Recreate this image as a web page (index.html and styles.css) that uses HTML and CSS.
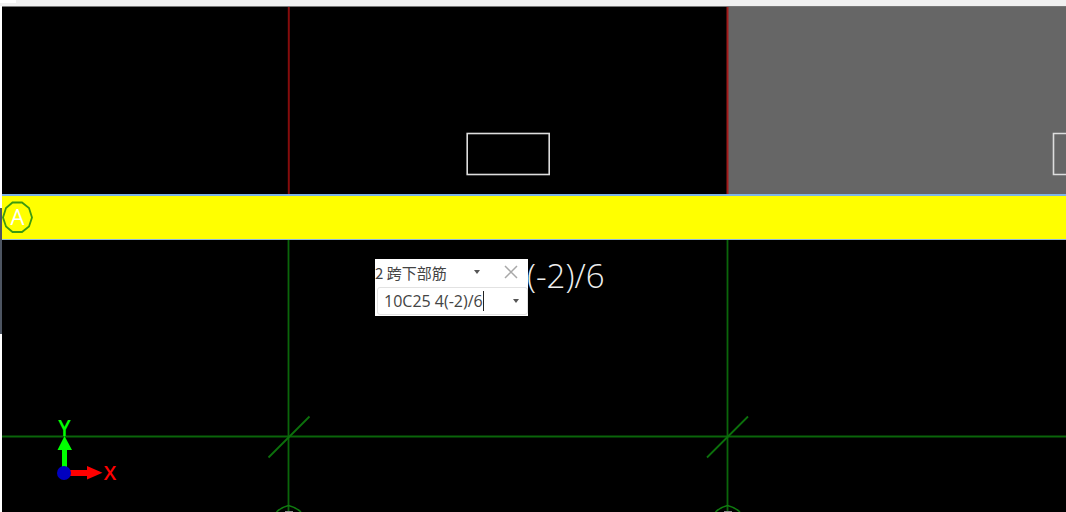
FILE: index.html
```html
<!DOCTYPE html>
<html lang="zh">
<head>
<meta charset="utf-8">
<title>CAD</title>
<link rel="stylesheet" href="styles.css">
</head>
<body>
<div class="app">
  <div class="topbar"><div class="tab"></div></div>
  <div class="workspace">
    <div class="strip"><div class="strip-dark"></div></div>
    <div class="canvas">
      <svg class="drawing" width="1064" height="506" viewBox="2 6 1064 506" xmlns="http://www.w3.org/2000/svg">
        <rect x="2" y="6" width="1064" height="506" fill="#000"/>
        <rect x="728" y="7" width="338" height="188" fill="#666"/>
        <rect x="2" y="6" width="1064" height="1" fill="#777"/>
        <path d="M288.8 7V195" stroke="#860c0c" stroke-width="2" fill="none"/>
        <path d="M727.500 7V195" stroke="#a31a1a" stroke-width="2" fill="none"/>
        <rect x="467.200" y="133.500" width="82" height="41" fill="none" stroke="#ddd" stroke-width="1.600"/>
        <path d="M1066 133.500H1053.500V174.500H1066" fill="none" stroke="#ddd" stroke-width="1.600"/>
        <path d="M288.500 240V512M727.500 240V512M2 436.500H1066" stroke="#0a650a" stroke-width="1.800" fill="none"/>
        <path d="M268.500 457.500L309.500 416.500M707 457.500L748 416.500" stroke="#0c700c" stroke-width="1.800" fill="none"/>
        <path d="M276.500 512Q281 507.500 288.500 505.500Q296 507.500 301 512M715.500 512Q720 507.500 727.500 505.500Q735 507.500 740 512" stroke="#0f7a0f" stroke-width="1.600" fill="none"/>
        <rect x="285" y="511" width="8" height="1" fill="#888"/>
        <rect x="724" y="511" width="8" height="1" fill="#888"/>
        <rect x="2" y="194" width="1064" height="2" fill="#7db4e6"/>
        <rect x="2" y="196" width="1064" height="43" fill="#ff0"/>
        <rect x="2" y="239" width="1064" height="1" fill="#8fb8d8"/>
        <polygon points="12.500,202.500 22,202.500 29,208 32,217.500 29,226.500 22,232 12.500,232 6,226.500 3,217.500 6,208" fill="none" stroke="#3d9a10" stroke-width="1.800"/>
        <text class="axis-label" x="17.500" y="225">A</text>
        <text class="bar-text" x="527" y="288">(-2)/6</text>
        <rect x="62" y="449" width="5" height="18" fill="#0f0"/>
        <path d="M64.500 436L72 450H57.500Z" fill="#0f0"/>
        <text class="y-label" x="64.500" y="436">Y</text>
        <rect x="70" y="470" width="18" height="6" fill="#f00"/>
        <path d="M87 466L102.500 472.800L87 479.500Z" fill="#f00"/>
        <circle cx="64" cy="473" r="7" fill="#0000c0"/>
        <text class="x-label" x="110" y="480">X</text>
      </svg>
      <div class="popup">
        <div class="popup-head">
          <span class="popup-title">2 跨下部筋</span>
          <svg class="caret caret-head" width="6" height="4" viewBox="0 0 6 4"><path d="M0 0H6L3 4Z" fill="#555"/></svg>
          <svg class="close" width="16" height="16" viewBox="0 0 16 16"><path d="M2 2L14 14M14 2L2 14" stroke="#a8a8a8" stroke-width="1.500" fill="none"/></svg>
        </div>
        <div class="popup-input">
          <span class="input-text">10C25 4(-2)/6</span><span class="cursor"></span>
          <svg class="caret caret-input" width="6" height="4" viewBox="0 0 6 4"><path d="M0 0H6L3 4Z" fill="#555"/></svg>
        </div>
      </div>
    </div>
  </div>
</div>
</body>
</html>
```

FILE: styles.css
```css
html, body {
  margin: 0;
  padding: 0;
  background: #fff;
}
.app {
  width: 1066px;
  height: 512px;
  display: flex;
  flex-direction: column;
  overflow: hidden;
  font-family: "Noto Sans CJK SC", "Noto Sans", sans-serif;
}
.topbar {
  height: 6px;
  flex: none;
  background: #f0f0f0;
}
.tab {
  width: 16px;
  height: 3px;
  background: #fff;
}
.workspace {
  flex: 1;
  display: flex;
  min-height: 0;
}
.strip {
  width: 2px;
  flex: none;
  background: #fff;
  padding-top: 202px;
}
.strip-dark {
  height: 126px;
  background: #4d5562;
}
.canvas {
  position: relative;
  flex: 1;
  background: #000;
}
.drawing {
  display: block;
}
.axis-label {
  font-family: "Open Sans", "Liberation Sans", sans-serif;
  font-size: 22px;
  fill: #fff;
  text-anchor: middle;
}
.bar-text {
  font-family: "Open Sans", "Liberation Sans", sans-serif;
  font-size: 33px;
  font-weight: 300;
  fill: #eee;
}
.y-label {
  font-family: "Open Sans", "Liberation Sans", sans-serif;
  font-size: 21px;
  font-weight: 600;
  fill: #0f0;
  text-anchor: middle;
}
.x-label {
  font-family: "Open Sans", "Liberation Sans", sans-serif;
  font-size: 20px;
  font-weight: 600;
  fill: #f00;
  text-anchor: middle;
}
.popup {
  position: absolute;
  left: 373px;
  top: 253px;
  width: 153px;
  height: 57px;
  box-sizing: border-box;
  background: #fff;
  display: flex;
  flex-direction: column;
  padding: 0 0 1px 2px;
}
.popup-head {
  height: 28px;
  flex: none;
  box-sizing: border-box;
  padding-bottom: 2px;
  display: flex;
  align-items: center;
  color: #444;
  font-size: 15px;
  margin-left: -2px;
}
.popup-title {
  width: 99px;
  white-space: nowrap;
}
.caret-head {
  margin-right: 23px;
}
.popup-input {
  flex: 1;
  display: flex;
  align-items: center;
  border: 1px solid #e2e2e2;
  border-radius: 3px;
  padding-left: 6px;
  color: #444;
  font-size: 16px;
  font-family: "Open Sans", "Noto Sans", sans-serif;
}
.cursor {
  width: 1px;
  height: 20px;
  background: #222;
}
.caret-input {
  margin-left: auto;
  margin-right: 8px;
}
```
